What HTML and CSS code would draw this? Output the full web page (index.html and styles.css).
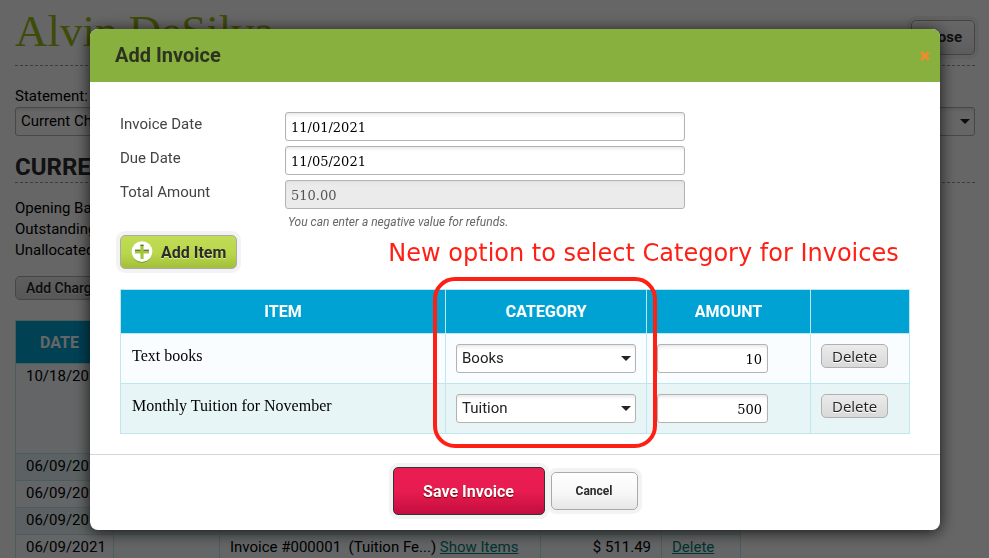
FILE: index.html
```html
<!DOCTYPE html>
<html lang="en">
<head>
<meta charset="utf-8">
<title>Add Invoice</title>
<link rel="stylesheet" href="styles.css">
</head>
<body>
<div class="page">
  <header class="page-head">
    <h1>Alvin DeSilva</h1>
    <button type="button" class="btn btn-light page-close">Close</button>
  </header>
  <label class="statement-label" for="statement">Statement:</label>
  <div class="select statement-select">
    <select id="statement"><option>Current Charges</option></select>
  </div>
  <h2>CURRENT</h2>
  <ul class="balances">
    <li>Opening Balance</li>
    <li>Outstanding</li>
    <li>Unallocated</li>
  </ul>
  <button type="button" class="btn-small add-charge">Add Charge</button>
  <table class="grid charges">
    <colgroup><col class="c-date"><col class="c-due"><col class="c-desc"><col class="c-amt"><col class="c-act"></colgroup>
    <thead><tr><th>DATE</th><th></th><th></th><th></th><th></th></tr></thead>
    <tbody>
      <tr class="tall"><td>10/18/2021</td><td></td><td></td><td></td><td></td></tr>
      <tr><td>06/09/2021</td><td></td><td></td><td></td><td></td></tr>
      <tr><td>06/09/2021</td><td></td><td></td><td></td><td></td></tr>
      <tr><td>06/09/2021</td><td></td><td></td><td></td><td></td></tr>
      <tr><td>06/09/2021</td><td></td><td>Invoice #000001 &nbsp;(Tuition Fe...) <a href="#items">Show Items</a></td><td class="num">$ 511.49</td><td><a href="#delete">Delete</a></td></tr>
    </tbody>
  </table>
</div>

<div class="overlay">
  <section class="modal" role="dialog" aria-labelledby="modal-title">
    <header class="modal-head">
      <h2 id="modal-title">Add Invoice</h2>
      <button type="button" class="modal-x" aria-label="Close">
        <svg viewBox="0 0 10 10" width="10" height="10"><path d="M2.2 2.2 7.8 7.8M7.8 2.2 2.2 7.8" stroke="#f58a2c" stroke-width="2.8" stroke-linecap="square"/></svg>
      </button>
    </header>
    <form class="modal-body" id="invoice-form">
      <div class="field"><label for="inv-date">Invoice Date</label><input id="inv-date" type="text" value="11/01/2021"></div>
      <div class="field"><label for="due-date">Due Date</label><input id="due-date" type="text" value="11/05/2021"></div>
      <div class="field"><label for="total">Total Amount</label><input id="total" type="text" value="510.00" readonly></div>
      <p class="hint">You can enter a negative value for refunds.</p>
      <div class="tools">
        <button type="button" class="btn btn-add">
          <svg viewBox="0 0 22 22" width="22" height="22"><circle cx="11" cy="11.6" r="10.2" fill="#6d8a1d"/><circle cx="11" cy="10.6" r="10.4" fill="#fff"/><path d="M9.4 4h3.2v5.4H18v3.2h-5.4V18H9.4v-5.4H4V9.4h5.4z" fill="#a3c73a"/><path d="M4 9.2h5.4M12.6 9.2H18M9.4 4.2h3.2" fill="none" stroke="#3c4c14" stroke-width="1"/></svg>
          Add Item
        </button>
        <p class="note">New option to select Category for Invoices</p>
      </div>
      <table class="grid items">
        <colgroup><col><col class="c-cat"><col class="c-amount"><col class="c-del"></colgroup>
        <thead><tr><th>ITEM</th><th class="cat-head">CATEGORY<span class="highlight"></span></th><th>AMOUNT</th><th></th></tr></thead>
        <tbody>
          <tr>
            <td class="item-name">Text books</td>
            <td><div class="select"><select aria-label="Category for Text books"><option>Books</option></select></div></td>
            <td><input class="amount" type="text" value="10" aria-label="Amount for Text books"></td>
            <td><button type="button" class="btn-small">Delete</button></td>
          </tr>
          <tr>
            <td class="item-name">Monthly Tuition for November</td>
            <td><div class="select"><select aria-label="Category for Monthly Tuition"><option>Tuition</option></select></div></td>
            <td><input class="amount" type="text" value="500" aria-label="Amount for Monthly Tuition"></td>
            <td><button type="button" class="btn-small">Delete</button></td>
          </tr>
        </tbody>
      </table>
    </form>
    <footer class="modal-foot">
      <button type="submit" form="invoice-form" class="btn btn-save">Save Invoice</button>
      <button type="button" class="btn btn-light btn-cancel">Cancel</button>
    </footer>
  </section>
</div>
</body>
</html>
```

FILE: styles.css
```css
* { box-sizing: border-box; }
body {
  margin: 0;
  font: 15px/21px Roboto, "Liberation Sans", sans-serif;
  color: #000;
  background: #fff;
}
h1, h2, p, ul { margin: 0; padding: 0; }
button, input, select { font: inherit; margin: 0; }

/* Shared controls */
.btn {
  border: 1px solid #aaa;
  border-radius: 5px;
  box-shadow: 0 0 0 4px #f3f3f3;
  font-weight: 700;
  white-space: nowrap;
}
.btn-light { background: linear-gradient(#fff, #f6f6f6 60%, #e6e6e6); color: #2b2b2b; }
.btn-small {
  display: block;
  height: 24px;
  padding: 0 10px;
  border: 1px solid #b0b0b0;
  border-radius: 5px;
  background: linear-gradient(#ebebeb, #d9d9d9);
  color: #222;
  font: 15px/22px "Open Sans", sans-serif;
  text-shadow: 0 1px 0 #fff;
}
input[type="text"], .select select {
  height: 29px;
  border: 1px solid #b3b3b3;
  border-radius: 3px;
  background: #fff;
  box-shadow: inset 0 3px 4px -2px #ddd;
}
input[type="text"] {
  padding: 2px 5px 0;
  color: #000;
  font: 13px "DejaVu Serif", serif;
}
.select { position: relative; }
.select select {
  display: block;
  width: 100%;
  padding: 0 20px 0 5px;
  appearance: none;
  color: #222;
}
.select::after {
  content: "";
  position: absolute;
  right: 5px;
  top: 12px;
  border: 5px solid transparent;
  border-top-color: #222;
  border-bottom: 0;
}

.grid { border-collapse: collapse; table-layout: fixed; }
.grid th, .grid td { border: 1px solid #bfe8ee; }
.grid th {
  height: 43px;
  padding: 0;
  background: #00a2d3;
  color: #fff;
  font-weight: 700;
}

/* Page under the dialog */
.page { height: 100vh; overflow: hidden; padding: 0 14px 0 15px; }
.page-head {
  display: flex;
  justify-content: space-between;
  align-items: flex-start;
  height: 66px;
  border-bottom: 1px dashed #999;
}
h1 {
  padding-top: 7px;
  font: 45px/48px "Liberation Serif", serif;
  color: #9cbc18;
}
.page-close { width: 64px; height: 35px; margin-top: 20px; }
.statement-label { display: block; margin-top: 20px; }
.statement-select select { color: #000; }
.page h2 {
  margin-top: 18px;
  padding-bottom: 1px;
  border-bottom: 1px dashed #999;
  font-size: 24px;
  line-height: 27px;
  color: #2b2b2b;
}
.balances { margin-top: 15px; list-style: none; }
.add-charge { margin: 15px 0 20px; font: 500 14px/20px Roboto, sans-serif; }
.charges th { font-size: 16px; padding-right: 10px; }
.charges td { height: 27px; padding: 0 10px; vertical-align: top; line-height: 24px; white-space: nowrap; background: #f9fdff; }
.charges tr:nth-child(even) td { background: #e7f5f7; }
.charges { width: 726px; }
.charges .tall td { height: 90px; }
.charges .num { text-align: right; }
.charges a { color: #00807a; }
.c-date { width: 98px; }
.c-due { width: 106px; }
.c-desc { width: 321px; }
.c-amt { width: 121px; }
.c-act { width: 79px; }

/* Dialog */
.overlay {
  position: fixed;
  inset: 0;
  padding: 29px 49px 0 90px;
  background: rgba(0, 0, 0, .6);
}
.modal {
  border-radius: 8px;
  background: #fff;
  box-shadow: 0 2px 16px rgba(0, 0, 0, .8);
}
.modal-head {
  display: flex;
  justify-content: space-between;
  align-items: center;
  height: 53px;
  padding: 0 10px 2px 25px;
  border-radius: 8px 8px 0 0;
  background: #88b03f;
}
.modal-head h2 { font-size: 20px; font-weight: 700; line-height: 24px; color: #2d3320; }
.modal-x { display: flex; padding: 3px 0 0; border: 0; background: none; }
.modal-body { padding: 30px 30px 20px; color: #444; }
.field { display: flex; margin-bottom: 5px; }
.field label { width: 165px; padding-top: 2px; }
.field input { width: 400px; }
.field input[readonly] { background: #ebebeb; color: #555; }
.hint {
  margin-left: 168px;
  font-size: 12px;
  font-style: italic;
  line-height: 16px;
  color: #666;
}
.tools { display: flex; align-items: center; margin: 5px 0 20px; }
.btn-add {
  display: flex;
  align-items: center;
  gap: 8px;
  height: 34px;
  padding: 0 10px;
  background: linear-gradient(#c0dc58, #b9d749 55%, #a3bf3c);
  color: #2b2b2b;
  font-size: 16px;
  text-shadow: 0 1px 0 #dcec9c;
}
.note { margin-left: 151px; padding-top: 2px; font: 24px/28px "DejaVu Sans", sans-serif; color: #ff2015; white-space: nowrap; }
.items { width: 100%; }
.items th { height: 44px; font-size: 16px; }
.items td { height: 50px; padding: 10px; vertical-align: top; background: #f9fdff; }
.items tr:nth-child(even) td { background: #e7f5f7; }
.items .item-name { padding-left: 11px; font: 16px/24px "Liberation Serif", serif; color: #000; }
.c-cat { width: 201px; }
.c-amount { width: 164px; }
.c-del { width: 99px; }
.items .amount { display: block; width: 111px; text-align: right; }
.cat-head { position: relative; }
.highlight {
  position: absolute;
  z-index: 1;
  top: -13px;
  left: -13px;
  right: -11px;
  height: 171px;
  border: 4px solid #ff2015;
  border-radius: 22px;
  pointer-events: none;
}
.modal-foot {
  display: flex;
  justify-content: center;
  align-items: center;
  gap: 6px;
  height: 76px;
  padding-bottom: 3px;
  border-top: 1px solid #d5d5d5;
}
.btn-save {
  width: 152px;
  height: 48px;
  border-color: #333;
  background: linear-gradient(#ea1d52, #e81c50 50%, #c40d3f);
  color: #fff;
  font-size: 16px;
  text-shadow: 0 1px 1px #700;
}
.btn-cancel { width: 87px; height: 38px; font-size: 12px; }
```
